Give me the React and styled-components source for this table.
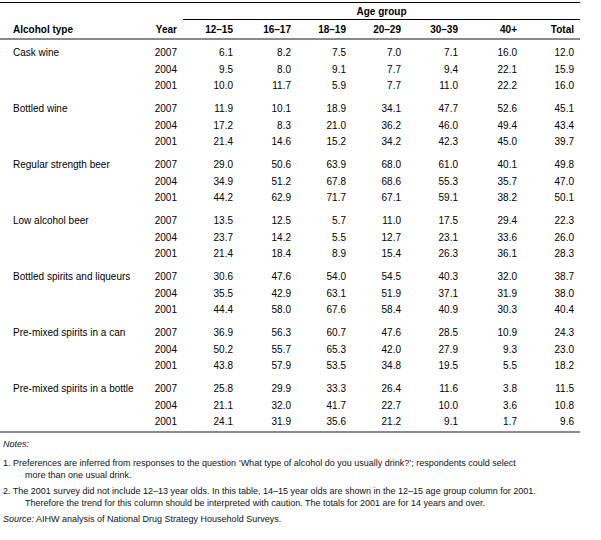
import styled, { createGlobalStyle } from 'styled-components'

const GlobalStyle = createGlobalStyle`
  html, body {
    margin: 0;
    padding: 0;
    background: #fff;
  }
  body {
    font-family: "Liberation Sans", Arial, sans-serif;
    color: #000;
  }
`

const Page = styled.div`
  width: 601px;
  padding-top: 2px;
`

const Table = styled.table`
  width: 580px;
  border-collapse: separate;
  border-spacing: 0;
  table-layout: fixed;
  font-size: 10px;
  border-top: 1px solid #000;
  border-bottom: 2px solid #8a8a8a;
`

const HeadCell = styled.th`
  font-weight: bold;
  text-align: right;
  padding: 0 6px 0 0;
  height: 18px;
  vertical-align: middle;
  border-bottom: 2px solid #8a8a8a;
`

const LabelHead = styled(HeadCell)`
  text-align: left;
  padding: 0 0 0 13px;
`

const SpacerHead = styled.th`
  height: 17px;
  padding: 0;
`

const AgeCell = styled.th`
  height: 16px;
  padding: 0;
  text-align: center;
  font-weight: bold;
  vertical-align: middle;
  border-bottom: 1px solid #000;
`

const Cell = styled.td`
  text-align: right;
  padding: ${p => p.$gap}px 6px 0 0;
  height: 16.5px;
  line-height: 16.5px;
  white-space: nowrap;
`

const LabelCell = styled(Cell)`
  text-align: left;
  padding: ${p => p.$gap}px 0 0 13px;
`

const Notes = styled.div`
  padding: 5px 0 0 3px;
  font-size: 9px;
  line-height: 12px;
  color: #111;
`

const NotesTitle = styled.div`
  font-style: italic;
  margin-bottom: 7px;
`

const Note = styled.p`
  margin: 0 0 4px 0;
  padding-left: 22px;
  text-indent: -22px;
`

const Source = styled.div`
  em { font-style: italic; }
`

const widths = [143, 40, 56, 58, 55, 55, 57, 59, 57]
const ages = ['12–15', '16–17', '18–19', '20–29', '30–39', '40+', 'Total']

const data = [
  ['Cask wine', [
    ['2007', '6.1', '8.2', '7.5', '7.0', '7.1', '16.0', '12.0'],
    ['2004', '9.5', '8.0', '9.1', '7.7', '9.4', '22.1', '15.9'],
    ['2001', '10.0', '11.7', '5.9', '7.7', '11.0', '22.2', '16.0'],
  ]],
  ['Bottled wine', [
    ['2007', '11.9', '10.1', '18.9', '34.1', '47.7', '52.6', '45.1'],
    ['2004', '17.2', '8.3', '21.0', '36.2', '46.0', '49.4', '43.4'],
    ['2001', '21.4', '14.6', '15.2', '34.2', '42.3', '45.0', '39.7'],
  ]],
  ['Regular strength beer', [
    ['2007', '29.0', '50.6', '63.9', '68.0', '61.0', '40.1', '49.8'],
    ['2004', '34.9', '51.2', '67.8', '68.6', '55.3', '35.7', '47.0'],
    ['2001', '44.2', '62.9', '71.7', '67.1', '59.1', '38.2', '50.1'],
  ]],
  ['Low alcohol beer', [
    ['2007', '13.5', '12.5', '5.7', '11.0', '17.5', '29.4', '22.3'],
    ['2004', '23.7', '14.2', '5.5', '12.7', '23.1', '33.6', '26.0'],
    ['2001', '21.4', '18.4', '8.9', '15.4', '26.3', '36.1', '28.3'],
  ]],
  ['Bottled spirits and liqueurs', [
    ['2007', '30.6', '47.6', '54.0', '54.5', '40.3', '32.0', '38.7'],
    ['2004', '35.5', '42.9', '63.1', '51.9', '37.1', '31.9', '38.0'],
    ['2001', '44.4', '58.0', '67.6', '58.4', '40.9', '30.3', '40.4'],
  ]],
  ['Pre-mixed spirits in a can', [
    ['2007', '36.9', '56.3', '60.7', '47.6', '28.5', '10.9', '24.3'],
    ['2004', '50.2', '55.7', '65.3', '42.0', '27.9', '9.3', '23.0'],
    ['2001', '43.8', '57.9', '53.5', '34.8', '19.5', '5.5', '18.2'],
  ]],
  ['Pre-mixed spirits in a bottle', [
    ['2007', '25.8', '29.9', '33.3', '26.4', '11.6', '3.8', '11.5'],
    ['2004', '21.1', '32.0', '41.7', '22.7', '10.0', '3.6', '10.8'],
    ['2001', '24.1', '31.9', '35.6', '21.2', '9.1', '1.7', '9.6'],
  ]],
]

export default function App() {
  return (
    <Page>
      <GlobalStyle />
      <Table>
        <colgroup>
          {widths.map((w, i) => <col key={i} style={{ width: w }} />)}
        </colgroup>
        <thead>
          <tr>
            <SpacerHead />
            <SpacerHead />
            <AgeCell colSpan={7}>Age group</AgeCell>
          </tr>
          <tr>
            <LabelHead>Alcohol type</LabelHead>
            <HeadCell>Year</HeadCell>
            {ages.map(a => <HeadCell key={a}>{a}</HeadCell>)}
          </tr>
        </thead>
        {data.map(([label, rows], gi) => (
          <tbody key={label}>
            {rows.map((row, ri) => {
              const gap = ri === 0 ? (gi === 0 ? 5 : 6.5) : 0
              return (
                <tr key={row[0]}>
                  <LabelCell $gap={gap}>{ri === 0 ? label : ''}</LabelCell>
                  {row.map((v, ci) => <Cell key={ci} $gap={gap}>{v}</Cell>)}
                </tr>
              )
            })}
          </tbody>
        ))}
      </Table>
      <Notes>
        <NotesTitle>Notes:</NotesTitle>
        <Note>
          1. Preferences are inferred from responses to the question ‘What type of alcohol do you usually drink?’; respondents could select<br />
          more than one usual drink.
        </Note>
        <Note>
          2. The 2001 survey did not include 12–13 year olds. In this table, 14–15 year olds are shown in the 12–15 age group column for 2001.<br />
          Therefore the trend for this column should be interpreted with caution. The totals for 2001 are for 14 years and over.
        </Note>
        <Source><em>Source:</em> AIHW analysis of National Drug Strategy Household Surveys.</Source>
      </Notes>
    </Page>
  )
}
